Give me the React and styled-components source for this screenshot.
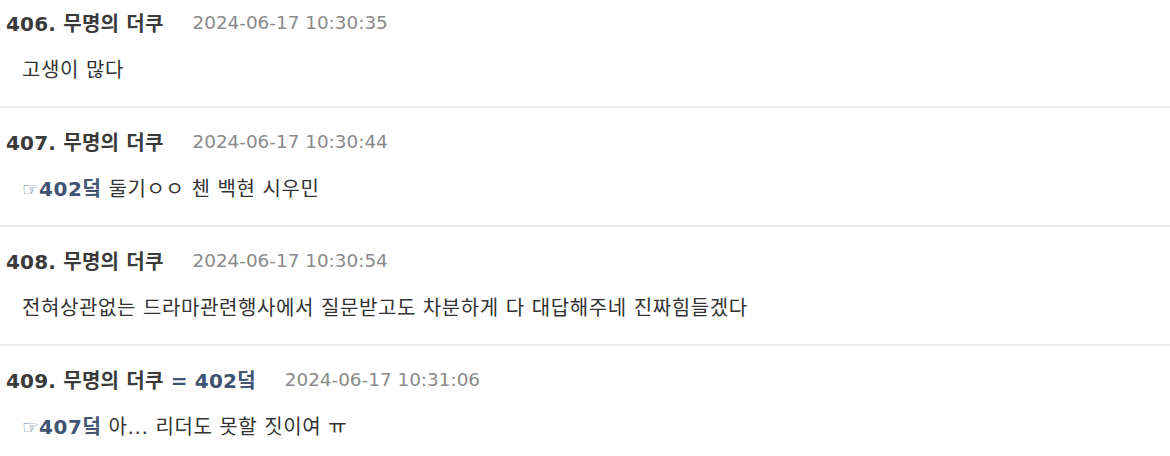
import styled, { createGlobalStyle } from "styled-components";

const GlobalStyle = createGlobalStyle`
  html, body {
    margin: 0;
    padding: 0;
    background: #ffffff;
  }
  body {
    font-family: "DejaVu Sans", "Noto Sans CJK KR", sans-serif;
    color: #333333;
    overflow: hidden;
  }
`;

const List = styled.div`
  width: 1170px;
  margin-top: -11px;
`;

const Post = styled.div`
  padding: 21px 0 24px;
  border-bottom: 2px solid #ececec;
`;

const Header = styled.div`
  display: flex;
  align-items: center;
  height: 24px;
  padding-left: 6px;
  white-space: nowrap;
`;

const Author = styled.span`
  font-size: 20px;
  font-weight: 700;
  letter-spacing: 0.2px;
  color: #3a3a3a;
`;

const Ref = styled.span`
  font-weight: 700;
  color: #3f5373;
`;

const Time = styled.span`
  margin-left: 29px;
  font-size: 18.4px;
  color: #8a8a8a;
`;

const Body = styled.div`
  margin-top: 24px;
  height: 24px;
  line-height: 24px;
  padding-left: 22px;
  font-size: 20px;
  letter-spacing: 0.6px;
  color: #333333;
  white-space: nowrap;
`;

const Hand = styled.span`
  color: #6b7c96;
  font-weight: 400;
  font-size: 19px;
  letter-spacing: 0;
`;

const posts = [
  { no: 406, time: "2024-06-17 10:30:35", text: "고생이 많다" },
  { no: 407, time: "2024-06-17 10:30:44", reply: "402덬", text: " 둘기ㅇㅇ 첸 백현 시우민" },
  {
    no: 408,
    time: "2024-06-17 10:30:54",
    text: "전혀상관없는 드라마관련행사에서 질문받고도 차분하게 다 대답해주네 진짜힘들겠다",
  },
  { no: 409, time: "2024-06-17 10:31:06", same: "402덬", reply: "407덬", text: " 아... 리더도 못할 짓이여 ㅠ" },
];

export default function App() {
  return (
    <>
      <GlobalStyle />
      <List>
        {posts.map((p) => (
          <Post key={p.no}>
            <Header>
              <Author>
                {p.no}. 무명의 더쿠
                {p.same && <Ref> = {p.same}</Ref>}
              </Author>
              <Time>{p.time}</Time>
            </Header>
            <Body>
              {p.reply && (
                <Ref>
                  <Hand>☞</Hand>
                  {p.reply}
                </Ref>
              )}
              {p.text}
            </Body>
          </Post>
        ))}
      </List>
    </>
  );
}
